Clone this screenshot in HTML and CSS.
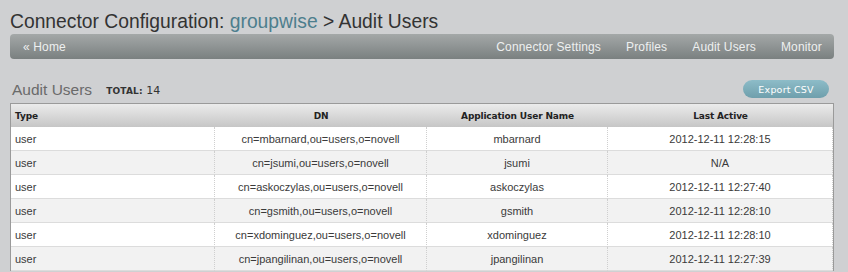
FILE: index.html
```html
<!DOCTYPE html>
<html>
<head>
<meta charset="utf-8">
<link rel="stylesheet" href="styles.css">
</head>
<body>
<div class="page">
  <h1 class="title">Connector Configuration: <a class="crumb" href="#">groupwise</a> &gt; Audit Users</h1>
  <nav class="navbar">
    <a class="nav-home" href="#">« Home</a>
    <div class="nav-links">
      <a href="#">Connector Settings</a>
      <a href="#">Profiles</a>
      <a href="#">Audit Users</a>
      <a href="#">Monitor</a>
    </div>
  </nav>
  <div class="section-head">
    <h2 class="section-title">Audit Users</h2>
    <span class="total"><b>TOTAL:</b> 14</span>
    <button class="export">Export CSV</button>
  </div>
  <table class="grid">
    <thead>
      <tr>
        <th class="c-type">Type</th>
        <th class="c-dn">DN</th>
        <th class="c-app">Application User Name</th>
        <th class="c-last">Last Active</th>
      </tr>
    </thead>
    <tbody>
      <tr><td>user</td><td>cn=mbarnard,ou=users,o=novell</td><td>mbarnard</td><td>2012-12-11 12:28:15</td></tr>
      <tr><td>user</td><td>cn=jsumi,ou=users,o=novell</td><td>jsumi</td><td>N/A</td></tr>
      <tr><td>user</td><td>cn=askoczylas,ou=users,o=novell</td><td>askoczylas</td><td>2012-12-11 12:27:40</td></tr>
      <tr><td>user</td><td>cn=gsmith,ou=users,o=novell</td><td>gsmith</td><td>2012-12-11 12:28:10</td></tr>
      <tr><td>user</td><td>cn=xdominguez,ou=users,o=novell</td><td>xdominguez</td><td>2012-12-11 12:28:10</td></tr>
      <tr><td>user</td><td>cn=jpangilinan,ou=users,o=novell</td><td>jpangilinan</td><td>2012-12-11 12:27:39</td></tr>
    </tbody>
  </table>
</div>
</body>
</html>
```

FILE: styles.css
```css
html, body {
  margin: 0;
  padding: 0;
  background: #cfd0d2;
  overflow: hidden;
}

.page {
  width: 824px;
  margin-left: 10px;
  padding-top: 11px;
  font-family: "Liberation Sans", Arial, sans-serif;
}

.title {
  margin: 0 0 1px 0;
  font-size: 19.3px;
  line-height: 22px;
  font-weight: normal;
  color: #333333;
  white-space: nowrap;
}

.crumb {
  color: #4d7e8d;
  text-decoration: none;
}

.navbar {
  display: flex;
  align-items: center;
  justify-content: space-between;
  height: 25px;
  border-radius: 4px;
  background: linear-gradient(#a4a8a8, #7a8080);
  padding: 0 0 0 13px;
  box-sizing: border-box;
}

.navbar a {
  color: #eef0f0;
  text-decoration: none;
  font-size: 12px;
  letter-spacing: 0.15px;
}

.nav-links {
  display: flex;
}

.nav-links a {
  padding: 0 12px 0 13px;
}

.section-head {
  display: flex;
  align-items: flex-end;
  height: 39px;
  margin-bottom: 5px;
}

.section-title {
  margin: 0 0 0 2px;
  font-size: 15.5px;
  line-height: 17px;
  font-weight: normal;
  color: #6a6a6a;
}

.total {
  margin: 0 0 1px 14px;
  font-family: "DejaVu Sans", sans-serif;
  font-size: 11px;
  line-height: 12px;
  color: #333;
}

.total b {
  font-size: 9px;
  letter-spacing: 0.2px;
}

.export {
  margin-left: auto;
  margin-right: 5px;
  width: 86px;
  height: 18px;
  border: none;
  border-radius: 9px;
  background: linear-gradient(#8dbcc8, #6f9fac);
  color: #ffffff;
  font-family: "DejaVu Sans", sans-serif;
  font-size: 9.5px;
  letter-spacing: 0.2px;
  padding: 0;
}

.grid {
  width: 824px;
  table-layout: fixed;
  border-collapse: separate;
  border-spacing: 0;
  border: 1px solid #9a9a9a;
  border-bottom: none;
  background: #ffffff;
}

.grid th {
  box-sizing: border-box;
  height: 23px;
  padding: 0 4px;
  background: linear-gradient(#ebebeb, #c6c6c6);
  font-family: "DejaVu Sans", sans-serif;
  font-size: 9px;
  letter-spacing: -0.15px;
  font-weight: bold;
  color: #222222;
  text-align: center;
}

.grid th.c-type {
  text-align: left;
  width: 204px;
}

.grid th.c-dn { width: 212px; }
.grid th.c-app { width: 181px; }

.grid td {
  box-sizing: border-box;
  height: 24px;
  padding: 0 4px;
  border-right: 1px dotted #cfcfcf;
  border-bottom: 1px solid #dcdcdc;
  font-size: 11px;
  color: #3a3a3a;
  text-align: center;
  white-space: nowrap;
}

.grid td:first-child {
  text-align: left;
}

.grid tbody tr:nth-child(even) td {
  background: #f2f2f2;
}
```
